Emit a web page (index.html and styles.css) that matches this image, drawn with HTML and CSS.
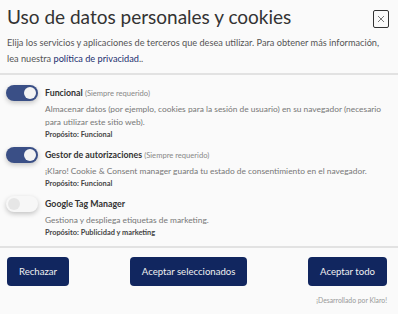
FILE: index.html
```html
<!DOCTYPE html>
<html lang="es">
<head>
<meta charset="utf-8">
<link rel="stylesheet" href="styles.css">
</head>
<body>
<div class="modal">
  <div class="header">
    <div class="head-row">
      <h1 class="title">Uso de datos personales y cookies</h1>
      <button class="close" aria-label="Cerrar">
        <svg width="8" height="8" viewBox="0 0 8 8"><path d="M1 1L7 7M7 1L1 7" stroke="#777" stroke-width="1" fill="none"/></svg>
      </button>
    </div>
    <p class="intro">Elija los servicios y aplicaciones de terceros que desea utilizar. Para obtener más información, lea nuestra <a class="link" href="#">política de privacidad</a>..</p>
  </div>
  <div class="services">
    <div class="service">
      <span class="switch on"><span class="knob"></span></span>
      <div class="info">
        <div class="name">Funcional <span class="req">(Siempre requerido)</span></div>
        <p class="desc">Almacenar datos (por ejemplo, cookies para la sesión de usuario) en su navegador (necesario para utilizar este sitio web).</p>
        <p class="purpose">Propósito: Funcional</p>
      </div>
    </div>
    <div class="service">
      <span class="switch on"><span class="knob"></span></span>
      <div class="info">
        <div class="name">Gestor de autorizaciones <span class="req">(Siempre requerido)</span></div>
        <p class="desc">¡Klaro! Cookie &amp; Consent manager guarda tu estado de consentimiento en el navegador.</p>
        <p class="purpose">Propósito: Funcional</p>
      </div>
    </div>
    <div class="service">
      <span class="switch off"><span class="knob"></span></span>
      <div class="info">
        <div class="name">Google Tag Manager</div>
        <p class="desc">Gestiona y despliega etiquetas de marketing.</p>
        <p class="purpose">Propósito: Publicidad y marketing</p>
      </div>
    </div>
  </div>
  <div class="footer">
    <div class="buttons">
      <button class="btn">Rechazar</button>
      <button class="btn">Aceptar seleccionados</button>
      <button class="btn">Aceptar todo</button>
    </div>
    <p class="powered">¡Desarrollado por Klaro!</p>
  </div>
</div>
</body>
</html>
```
FILE: styles.css
```css
* { box-sizing: border-box; }
html, body { margin: 0; padding: 0; }
body {
  background: #fafafa;
  font-family: Lato, "Liberation Sans", sans-serif;
  color: #333;
  width: 398px;
  height: 314px;
  overflow: hidden;
}
.modal { display: flex; flex-direction: column; }
.header {
  padding: 4px 7px 6px 7px;
  border-bottom: 2px solid #e2e2e2;
}
.head-row {
  display: flex;
  justify-content: space-between;
  align-items: flex-start;
}
.title {
  margin: 0;
  font-size: 19px;
  font-weight: 400;
  color: #333;
  line-height: 26px;
}
.close {
  margin: 6px 2px 0 0;
  width: 16px;
  height: 18px;
  border: 1px solid #333;
  border-radius: 2px;
  background: #fafafa;
  padding: 0;
  display: flex;
  align-items: center;
  justify-content: center;
}
.intro {
  margin: 5px 0 0 0;
  font-size: 9.2px;
  line-height: 16px;
  color: #555;
}
.link { color: #1d3070; text-decoration: none; }
.services {
  padding: 10px 7px 1px 6px;
  border-bottom: 2px solid #e2e2e2;
}
.service {
  display: flex;
  gap: 7px;
  margin-bottom: 7px;
}
.switch {
  flex: none;
  width: 32px;
  height: 16px;
  border-radius: 8px;
  display: flex;
  align-items: center;
  padding: 0 2px;
  box-shadow: 0 2px 5px rgba(0,0,0,0.22);
}
.switch.on { background: #3a4f86; justify-content: flex-end; }
.switch.off { background: #f7f7f7; justify-content: flex-start; }
.knob {
  width: 12px;
  height: 12px;
  border-radius: 50%;
  background: #f3f3f3;
}
.switch.off .knob { background: #e6e6e6; }
.info { flex: 1; }
.name {
  font-size: 8.8px;
  font-weight: 700;
  color: #333;
  line-height: 16px;
}
.req { font-size: 7.6px; font-weight: 400; color: #888; }
.desc {
  margin: 2px 0 0 0;
  font-size: 8.4px;
  line-height: 13px;
  color: #777;
}
.purpose {
  margin: 0;
  font-size: 7.4px;
  font-weight: 700;
  color: #444;
  line-height: 11px;
}
.footer { padding: 9px 11px 0 7px; }
.buttons {
  display: flex;
  justify-content: space-between;
}
.btn {
  height: 29px;
  padding: 0 12px;
  background: #11265f;
  color: #f0f0f0;
  border: none;
  border-radius: 4px;
  font-family: inherit;
  font-size: 9.6px;
}
.powered {
  margin: 10px 0 0 0;
  text-align: right;
  font-size: 6.8px;
  color: #999;
}
```
